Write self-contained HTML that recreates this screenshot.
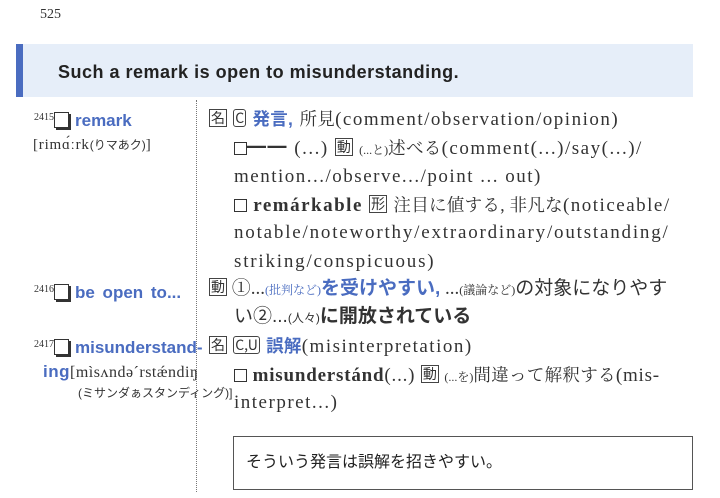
<!DOCTYPE html>
<html><head><meta charset="utf-8"><style>
body{margin:0;width:720px;height:498px;background:#fff;position:relative;overflow:hidden;font-family:"Liberation Serif","Noto Serif CJK SC",serif;color:#333}
.a{position:absolute;white-space:nowrap;line-height:24px;font-size:17px}
.r{font-size:19px;letter-spacing:1.5px}
.j{font-size:17.5px;letter-spacing:0.3px}
.b{color:#4a6cc0}
.sans{font-family:"Liberation Sans","Noto Sans CJK JP",sans-serif}
.bx{display:inline-block;border:1.3px solid #444;font-size:14px;line-height:16px;padding:0 1px;font-family:"Noto Sans CJK JP",sans-serif;vertical-align:2px;letter-spacing:0}
.sq{display:inline-block;width:11px;height:11px;border:1.5px solid #333;vertical-align:-1px}
.hw{font-family:"Liberation Sans","Noto Sans CJK JP",sans-serif;font-weight:bold;color:#4a6cc0;font-size:17px}
.num{font-size:10px;color:#333;vertical-align:6px;font-family:"Liberation Serif",serif}
.cb{display:inline-block;width:13px;height:14px;border:1.5px solid #333;box-shadow:2px 2px 0 #333;vertical-align:-2px;margin-right:6px}
.sm{font-size:12px;letter-spacing:0}
</style></head><body>
<div class="a" style="left:40px;top:3px;font-size:14px">525</div>
<div style="position:absolute;left:16px;top:44px;width:7px;height:53px;background:#4a6cc0"></div>
<div style="position:absolute;left:23px;top:44px;width:670px;height:53px;background:#e6eef9"></div>
<div class="a sans" style="left:58px;top:60px;font-size:18px;letter-spacing:0.5px;font-weight:bold;color:#222">Such a remark is open to misunderstanding.</div>
<div style="position:absolute;left:196px;top:100px;height:392px;border-left:1.5px dotted #777"></div>

<div class="a" style="left:34px;top:106px"><span class="num">2415</span><span class="cb"></span><span class="hw">remark</span></div>
<div class="a" style="left:33px;top:133px;font-size:15px;letter-spacing:0.8px">[rimɑ́ːrk<span class="sm sans">(りマあク)</span>]</div>
<div class="a" style="left:34px;top:278px"><span class="num">2416</span><span class="cb"></span><span class="hw" style="word-spacing:3px">be open to...</span></div>
<div class="a" style="left:34px;top:333px"><span class="num">2417</span><span class="cb"></span><span class="hw">misunderstand-</span></div>
<div class="a" style="left:43px;top:360px;font-size:16px;letter-spacing:0.5px"><span class="hw">ing</span>[mìsʌndəˊrstǽndiŋ</div>
<div class="a sans" style="left:78px;top:381px;font-size:12px">(ミサンダぁスタンディング)]</div>

<div class="a r" style="left:209px;top:107px"><span class="bx">名</span> <span class="bx" style="border-radius:3px">C</span> <b class="b sans j">発言,</b> <span class="j">所見</span>(comment/observation/opinion)</div>
<div class="a r" style="left:234px;top:136px"><span class="sq"></span><b>━━</b> (...) <span class="bx">動</span> <span class="sm">(...と)</span><span class="j">述べる</span>(comment(...)/say(...)/</div>
<div class="a r" style="left:234px;top:165px">mention.../observe.../point ... out)</div>
<div class="a r" style="left:234px;top:193px"><span class="sq"></span> <b>remárkable</b> <span class="bx">形</span> <span class="j">注目に値する, 非凡な</span>(noticeable/</div>
<div class="a r" style="left:234px;top:221px;letter-spacing:1.8px">notable/noteworthy/extraordinary/outstanding/</div>
<div class="a r" style="left:234px;top:250px;letter-spacing:1.8px">striking/conspicuous)</div>
<div class="a" style="left:209px;top:277px;font-size:19px"><span class="bx">動</span> ①...<span class="b sm">(批判など)</span><b class="b sans">を受けやすい,</b> ...<span class="sm">(議論など)</span><span class="sans">の対象になりやす</span></div>
<div class="a sans" style="left:234px;top:305px;font-size:19px">い②...<span class="sm">(人々)</span><b>に開放されている</b></div>
<div class="a r" style="left:209px;top:334px"><span class="bx">名</span> <span class="bx" style="border-radius:3px">C,U</span> <b class="b sans j">誤解</b>(misinterpretation)</div>
<div class="a r" style="left:234px;top:363px;letter-spacing:0.8px"><span class="sq"></span> <b>misunderstánd</b>(...) <span class="bx">動</span> <span class="sm">(...を)</span><span class="j">間違って解釈する</span>(mis-</div>
<div class="a r" style="left:234px;top:391px">interpret...)</div>

<div style="position:absolute;left:233px;top:436px;width:458px;height:52px;border:1.3px solid #555"></div>
<div class="a sans" style="left:246px;top:451px;font-size:16px;color:#222">そういう発言は誤解を招きやすい。</div>
</body></html>
